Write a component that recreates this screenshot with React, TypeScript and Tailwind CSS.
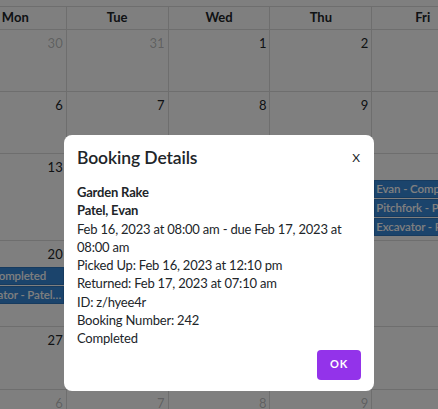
import React from "react";

type Ev = { title: string };

interface Day {
  n: number;
  other?: boolean;
  events?: Ev[];
}

const heads = ["Sun", "Mon", "Tue", "Wed", "Thu", "Fri", "Sat"];

const mk = (start: number, len: number, other: boolean) =>
  Array.from({ length: len }, (_, i) => ({ n: start + i, other }));

const weeks: { h: string; days: Day[] }[] = [
  { h: "h-[62px]", days: [...mk(29, 3, true), ...mk(1, 4, false)] },
  { h: "h-[62px]", days: mk(5, 7, false) },
  {
    h: "h-[87px]",
    days: mk(12, 7, false).map((d) =>
      d.n === 17
        ? {
            ...d,
            events: [
              { title: "Evan - Completed" },
              { title: "Pitchfork - Patel, Evan" },
              { title: "Excavator - Patel, Evan" },
            ],
          }
        : d
    ),
  },
  {
    h: "h-[86px]",
    days: mk(19, 7, false).map((d) =>
      d.n === 20
        ? {
            ...d,
            events: [
              { title: "Ed - Completed" },
              { title: "Excavator - Patel, Evan" },
            ],
          }
        : d
    ),
  },
  { h: "h-[63px]", days: [...mk(26, 3, false), ...mk(1, 4, true)] },
  { h: "h-[62px]", days: mk(5, 7, true) },
];

const DayCell = ({ day }: { day: Day }) => (
  <div className="border-r border-b border-[#dddddd] flex flex-col min-w-0">
    <div
      className={
        "text-right text-[13px] leading-[18px] pt-[4px] pr-[3px] " +
        (day.other ? "text-[#212529]/30" : "text-[#212529]")
      }
    >
      {day.n}
    </div>
    {day.events && (
      <div className="mt-[4px] flex flex-col gap-[1px] px-[2px]">
        {day.events.map((e, i) => (
          <div
            key={i}
            className="h-[18px] bg-[#3788d8] border border-[#2f77bf] text-white text-[11.5px] leading-[16px] font-semibold pl-[1px] truncate tracking-[-0.1px]"
          >
            {e.title}
          </div>
        ))}
      </div>
    )}
  </div>
);

export default function App() {
  return (
    <div
      className="relative w-[438px] h-[409px] overflow-hidden bg-white"
      style={{ fontFamily: "Lato, 'Noto Sans', sans-serif" }}
    >
      <div className="pt-[6px]">
        <div className="ml-[-138px] w-[714px] border-t border-l border-[#dddddd]">
          <div className="grid grid-cols-7 h-[23px]">
            {heads.map((h) => (
              <div
                key={h}
                className="border-r border-b border-[#dddddd] flex items-center justify-center text-[13px] font-bold text-[#212529]"
              >
                {h}
              </div>
            ))}
          </div>
          {weeks.map((w, i) => (
            <div key={i} className={"grid grid-cols-7 " + w.h}>
              {w.days.map((d, j) => (
                <DayCell key={j} day={d} />
              ))}
            </div>
          ))}
        </div>
      </div>

      <div className="absolute inset-0 bg-black/50" />

      <div className="absolute left-[64px] top-[135px] w-[310px] h-[256px] bg-white rounded-[8px] px-[13px] pt-[11px] text-[#212529]">
        <div className="flex items-start justify-between">
          <h2 className="text-[17.5px] leading-[24px] font-semibold tracking-[-0.1px]">Booking Details</h2>
          <button className="text-[12px] leading-[20px] mt-[2px] mr-[1px]">X</button>
        </div>
        <div className="mt-[13px] text-[13px] leading-[18.3px] tracking-[-0.2px]">
          <div className="font-bold">Garden Rake</div>
          <div className="font-bold">Patel, Evan</div>
          <div>Feb 16, 2023 at 08:00 am - due Feb 17, 2023 at 08:00 am</div>
          <div>Picked Up: Feb 16, 2023 at 12:10 pm</div>
          <div>Returned: Feb 17, 2023 at 07:10 am</div>
          <div>ID: z/hyee4r</div>
          <div>Booking Number: 242</div>
          <div>Completed</div>
        </div>
        <div className="flex justify-end mt-[2px]">
          <button className="w-[44px] h-[30px] rounded-[4px] bg-[#9333ea] text-white text-[11px] font-bold tracking-[0.08em]">
            OK
          </button>
        </div>
      </div>
    </div>
  );
}
